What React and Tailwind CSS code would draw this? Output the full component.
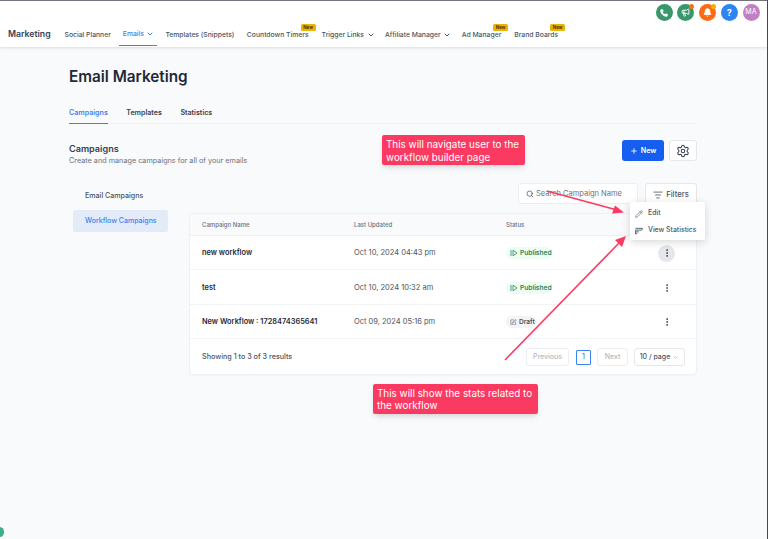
import React from "react";
import { ChevronDown, Phone, Megaphone, Bell, Plus, Settings, Search, ListFilter, Pencil, MoreVertical, SquarePen } from "lucide-react";

function NewBadge() {
  return <span className="absolute -top-[6px] right-[-7px] h-[7.5px] w-[15px] rounded-[1.5px] bg-[#eab308] text-[4.5px] leading-[7.5px] text-center font-semibold text-[#422006]">New</span>;
}

function NavItem({ label, badge, chevron, active, className = "" }) {
  return (
    <div className={`relative flex h-[23px] items-center gap-[2.5px] ${active ? "text-[#3b82f6] border-b border-[#3b82f6] pl-[4px] pr-[3px]" : "text-[#4b5563]"} ${className}`}>
      <span className="relative inline-block whitespace-nowrap leading-[10px]">
        {label}
        {badge && <NewBadge />}
      </span>
      {chevron && <ChevronDown size={8} strokeWidth={3} />}
    </div>
  );
}

function Circle({ color, children, dot }) {
  return (
    <div className={`relative flex h-[17px] w-[17px] items-center justify-center rounded-full text-white ${color}`}>
      {children}
      {dot && <span className={`absolute right-0 top-0 h-[5px] w-[5px] rounded-full ${dot}`} />}
    </div>
  );
}

function PublishedIcon() {
  return (
    <svg width="8" height="8" viewBox="0 0 8 8" fill="none" stroke="currentColor" strokeWidth="0.8">
      <path d="M1 1v6M3 1.2 7 4 3 6.8z" />
    </svg>
  );
}

function Status({ draft }) {
  if (draft) {
    return (
      <span className="flex h-[12px] w-[31px] items-center gap-[2.5px] rounded-full bg-[#f3f4f6] pl-[4px] text-[6.6px] font-semibold leading-[12px] text-[#4b5563]">
        <SquarePen size={6.5} strokeWidth={2} />Draft
      </span>
    );
  }
  return (
    <span className="flex h-[12px] w-[46px] items-center gap-[2px] rounded-full bg-[#ecfdf3] pl-[4px] text-[6.6px] font-semibold leading-[12px] text-[#2f855a]">
      <PublishedIcon />Published
    </span>
  );
}

function Row({ name, date, draft, h, activeMenu }) {
  return (
    <div className={`flex items-center border-b border-[#f3f4f6] pl-[12px] pr-[21px] pt-[1px] ${h}`}>
      <div className="w-[152px] text-[7.4px] font-semibold text-[#1f2937]">{name}</div>
      <div className="w-[152px] text-[7.5px] text-[#4b5563]">{date}</div>
      <div className="flex-1"><Status draft={draft} /></div>
      <div className={`flex h-[17px] w-[17px] items-center justify-center rounded-full text-[#374151] ${activeMenu ? "bg-[#e5e7eb]" : ""}`}>
        <MoreVertical size={10} strokeWidth={2.2} />
      </div>
    </div>
  );
}

function Note({ children, className }) {
  return (
    <div className={`absolute flex items-center rounded-[2px] bg-[#fb3a62] px-[4px] text-[9.9px] text-white shadow-md ${className}`}>
      <span>{children}</span>
    </div>
  );
}

export default function App() {
  return (
    <div className="relative h-[539px] w-[768px] overflow-hidden bg-[#f9fafb] font-['Inter',sans-serif]">
      <div className="h-[1px] bg-[#7a7480]" />
      <header className="relative h-[46px] bg-white shadow-[0_1px_3px_rgba(0,0,0,0.12)]">
        <div className="flex justify-end gap-[4.7px] pr-[8.5px] pt-[3px]">
          <Circle color="bg-[#38986b]"><Phone size={8} strokeWidth={2.5} fill="white" /></Circle>
          <Circle color="bg-[#38986b]" dot="bg-[#f97316]"><Megaphone size={9} strokeWidth={2.5} /></Circle>
          <Circle color="bg-[#fb6a14]" dot="bg-[#eab308]"><Bell size={9} strokeWidth={2.5} fill="white" /></Circle>
          <Circle color="bg-[#2f84f0]"><span className="text-[9px] font-bold">?</span></Circle>
          <Circle color="bg-[#c081c4]"><span className="text-[7px] tracking-[0.2px]">MA</span></Circle>
        </div>
        <nav className="flex items-center pl-[8px] pt-[2px] text-[6.8px] font-medium">
          <div className="mr-[14px] text-[8.7px] font-semibold text-[#374151]">Marketing</div>
          <NavItem label="Social Planner" className="mr-[8px]" />
          <NavItem label="Emails" chevron active className="mr-[8px]" />
          <NavItem label="Templates (Snippets)" className="mr-[12.5px]" />
          <NavItem label="Countdown Timers" badge className="mr-[13px]" />
          <NavItem label="Trigger Links" chevron className="mr-[10.5px]" />
          <NavItem label="Affiliate Manager" chevron className="mr-[10.5px]" />
          <NavItem label="Ad Manager" badge className="mr-[13px]" />
          <NavItem label="Brand Boards" badge />
        </nav>
      </header>

      <main className="pl-[69px] pr-[71px]">
        <h1 className="pt-[19px] text-[15.3px] font-semibold leading-[22px] text-[#1f2937]">Email Marketing</h1>
        <div className="mt-[14px] flex h-[22px] gap-[18.5px] border-b border-[#f1f2f4] text-[7.1px] font-semibold text-[#374151]">
          <div className="flex h-[22px] items-center border-b border-[#3b82f6] pt-[1px] text-[#3b82f6]">Campaigns</div>
          <div className="flex h-[22px] items-center pt-[1px]">Templates</div>
          <div className="flex h-[22px] items-center pt-[1px]">Statistics</div>
        </div>

        <div className="mt-[16px] flex h-[21px] items-start justify-between">
          <div>
            <div className="mt-[3px] text-[9.1px] font-semibold leading-[12px] text-[#374151]">Campaigns</div>
            <div className="mt-[1px] text-[7.25px] leading-[10px] text-[#6b7280]">Create and manage campaigns for all of your emails</div>
          </div>
          <div className="flex gap-[5px]">
            <button className="flex h-[21px] w-[42px] items-center justify-center gap-[3px] rounded-[3px] bg-[#155eef] pt-[1px] text-[7.2px] font-semibold text-white"><Plus size={8} strokeWidth={2.5} />New</button>
            <button className="flex h-[21px] w-[28px] items-center justify-center rounded-[3px] border border-[#e5e7eb] bg-white text-[#374151]"><Settings size={14} strokeWidth={1.8} /></button>
          </div>
        </div>

        <div className="mt-[22px] flex">
          <aside className="ml-[4px] w-[95px] pt-[2px]">
            <div className="flex h-[22px] items-center pl-[12px] pt-[1px] text-[7.1px] font-medium text-[#4b5563]">Email Campaigns</div>
            <div className="mt-[3px] flex h-[22px] items-center rounded-[2px] bg-[#e4ebf8] pl-[12px] pt-[1px] text-[7px] font-medium text-[#3b82f6]">Workflow Campaigns</div>
          </aside>
          <section className="ml-[21px] w-[508px]">
            <div className="flex justify-end gap-[7px]">
              <div className="flex h-[21px] w-[120px] items-center gap-[2px] rounded-[3px] border border-[#eceef1] bg-white pl-[7px] pt-[1px] text-[7.5px] text-[#6b7280]"><Search size={8} strokeWidth={2} className="text-[#374151]" />Search Campaign Name</div>
              <div className="flex h-[22px] w-[52px] items-center justify-center gap-[3px] rounded-[3px] border border-[#e5e7eb] bg-white pt-[1px] text-[7.7px] font-medium text-[#4b5563]"><ListFilter size={10} strokeWidth={2} />Filters</div>
            </div>
            <div className="mt-[8px] rounded-[4px] border border-[#f0f1f3] bg-white shadow-[0_1px_2px_rgba(0,0,0,0.03)]">
              <div className="flex h-[22px] items-center rounded-t-[4px] border-b border-[#eef0f2] bg-[#f9fafb] pl-[12px] text-[6px] font-medium text-[#6b7280]">
                <div className="w-[152px]">Campaign Name</div>
                <div className="w-[152px]">Last Updated</div>
                <div>Status</div>
              </div>
              <Row name="new workflow" date="Oct 10, 2024 04:43 pm" h="h-[34px]" activeMenu />
              <Row name="test" date="Oct 10, 2024 10:32 am" h="h-[35px]" />
              <Row name="New Workflow : 1728474365641" date="Oct 09, 2024 05:16 pm" draft h="h-[34px]" />
              <div className="flex h-[35px] items-center justify-between pl-[12px] pr-[11px] pt-[1px]">
                <div className="text-[7.2px] font-medium text-[#4b5563]">Showing 1 to 3 of 3 results</div>
                <div className="flex items-center gap-[6px] text-[7px] font-medium">
                  <div className="mr-[1px] flex h-[18px] w-[43px] items-center justify-center rounded-[3px] border border-[#eceef1] text-[#b4b9c2]">Previous</div>
                  <div className="flex h-[15px] w-[15px] items-center justify-center rounded-[1px] border border-[#3b82f6] text-[#3b82f6]">1</div>
                  <div className="flex h-[18px] w-[31px] items-center justify-center rounded-[3px] border border-[#eceef1] text-[#b4b9c2]">Next</div>
                  <div className="flex h-[18px] w-[51px] items-center justify-center gap-[2px] rounded-[3px] border border-[#e5e7eb] text-[#4b5563]">10 / page<ChevronDown size={7} className="text-[#9ca3af]" /></div>
                </div>
              </div>
            </div>
          </section>
        </div>
      </main>

      {/* context menu, over the table */}
      <div className="absolute left-[630px] top-[202px] h-[38px] w-[75px] rounded-[2px] bg-white py-[3px] text-[6.9px] font-medium text-[#4b5563] shadow-[0_2px_8px_rgba(0,0,0,0.16)]">
        <div className="flex h-[17px] items-center gap-[5px] pl-[5px]"><Pencil size={8} strokeWidth={1.8} />Edit</div>
        <div className="flex h-[17px] items-center gap-[5px] pl-[5px]">
          <svg width="8" height="8" viewBox="0 0 9 8" fill="none" stroke="currentColor" strokeWidth="1"><path d="M.5 1h8L7.5 3h-7M.5 3v4.5M.5 5h4M.5 7h2" /></svg>
          View Statistics
        </div>
      </div>

      {/* annotation arrows, over the page */}
      <svg className="absolute left-0 top-0" width="768" height="539" viewBox="0 0 768 539" fill="none">
        <path d="M547 191 L617 210" stroke="#fb3a62" strokeWidth="1.6" />
        <path d="M624 212.5 L612 213.5 L615 205.5 Z" fill="#fb3a62" />
        <path d="M505 360 L620 242" stroke="#fb3a62" strokeWidth="1.6" />
        <path d="M626 236 L622 247 L615 240 Z" fill="#fb3a62" />
      </svg>

      <Note className="left-[382px] top-[135px] h-[30px] w-[143px] pt-[1px] leading-[13px]">This will navigate user to the workflow builder page</Note>
      <Note className="left-[373px] top-[384px] h-[30px] w-[165px] leading-[12.5px]">This will show the stats related to the workflow</Note>

      <div className="absolute -left-[5px] top-[527px] h-[10px] w-[9px] rounded-full bg-[#3fae8a]" />
      <div className="absolute bottom-0 right-0 top-0 w-[1px] bg-[#4b4650]" />
    </div>
  );
}
